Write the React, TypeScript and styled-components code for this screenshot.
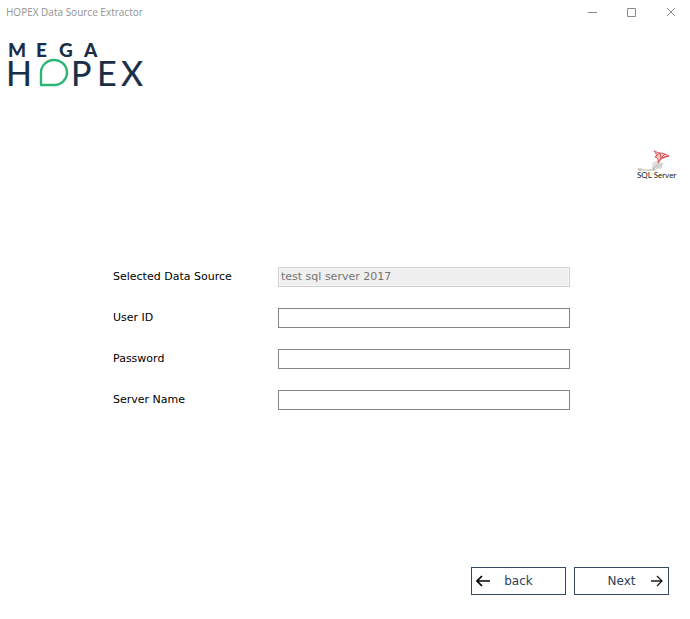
import React from "react";
import styled, { createGlobalStyle } from "styled-components";

const GlobalStyle = createGlobalStyle`
  *, *::before, *::after { box-sizing: border-box; }
  body {
    margin: 0;
    background: #ffffff;
    color: #000000;
    font: 11px/20px "DejaVu Sans", Verdana, sans-serif;
  }
`;

const Window = styled.div`
  display: flex;
  flex-direction: column;
  min-height: 100vh;
  background: #ffffff;
`;

const TitleBar = styled.header`
  display: flex;
  align-items: center;
  justify-content: space-between;
  height: 24px;
  padding-left: 6px;
`;

const Title = styled.h1`
  margin: 0;
  color: #929292;
  font: 400 10px/16px "Open Sans", "Noto Sans", sans-serif;
`;

const WindowControls = styled.div`
  display: flex;
`;

const WindowButton = styled.button`
  display: flex;
  align-items: center;
  justify-content: center;
  width: 39px;
  height: 24px;
  padding: 0;
  border: 0;
  background: transparent;
  color: #8a8a8a;
`;

const Brand = styled.div`
  display: flex;
  padding: 12px 6px 0;
`;

const SourceType = styled.div`
  display: flex;
  justify-content: flex-end;
  padding: 55px 12px 0;
`;

const Form = styled.form`
  display: flex;
  flex: 1;
  flex-direction: column;
`;

const Fields = styled.div`
  display: flex;
  flex-direction: column;
  gap: 21px;
  padding: 87px 120px 40px 113px;
`;

const Field = styled.div`
  display: flex;
  align-items: flex-start;
`;

const Label = styled.label`
  flex: 0 0 165px;
`;

const TextBox = styled.input`
  flex: 1;
  min-width: 0;
  height: 20px;
  padding: 0 2px;
  border: 1px solid #858585;
  border-radius: 0;
  background: #ffffff;
  color: #000000;
  font: inherit;

  &:disabled {
    border-color: #cfcfcf;
    background: #efefef;
    color: #747474;
    box-shadow: inset 0 0 0 1px #f8f8f8;
  }
`;

const Actions = styled.footer`
  display: flex;
  justify-content: flex-end;
  gap: 8px;
  margin-top: auto;
  padding: 0 21px 24px;
`;

const ActionButton = styled.button`
  display: grid;
  grid-template-columns: 14px 1fr 14px;
  align-items: center;
  width: 95px;
  height: 28px;
  padding: 0 4px;
  border: 1px solid #34495f;
  border-radius: 0;
  background: #ffffff;
  color: #2b3f55;
  font: 12px/16px "DejaVu Sans", Verdana, sans-serif;
  text-align: center;
`;

const ActionText = styled.span`
  grid-column: 2;
`;

function HopexLogo() {
  return (
    <svg width="140" height="58" viewBox="6 36 140 58" role="img" aria-label="MEGA HOPEX">
      <g fill="#1a2e47" fontFamily="Lato, sans-serif">
        <text x="8 36 59 84" y="57" fontSize="19" fontWeight="900">MEGA</text>
        <g fontSize="34" stroke="#1a2e47" strokeWidth="0.2">
          <text x="6" y="86">H</text>
          <text x="71 97 121" y="86">PEX</text>
        </g>
      </g>
      <path d="M41 85V73a13 12.5 0 1 1 13 12Z" fill="none" stroke="#2bb673" strokeWidth="2.4" strokeLinejoin="round" />
    </svg>
  );
}

function SqlServerLogo() {
  return (
    <svg width="42" height="31" viewBox="636 149 42 31" role="img" aria-label="Microsoft SQL Server">
      <path d="M652 163c3-2 7-2 11 0l-3 6-5-1-3 2c1-3 1-4 0-7Z" fill="#dedede" />
      <path d="M652 168l7-4M654 169l5-5M656 169l6-5M660 169l3-6" fill="none" stroke="#b9b9b9" strokeWidth="0.7" />
      <path d="M654 151c2 0 3 2 6 2 4 0 7 2 9 3-5 1-8 3-11 6 0-3-1-4-3-5 2-1 2-2-1-6Z" fill="#f6c9c9" />
      <path d="M654 151c3 3 3 5 1 6 3 1 4 3 3 6 2-4 6-6 11-7-3-2-6-3-9-3s-4-2-6-2M655 157l5-4 1 5 4-4M658 162l3-4 8-2" fill="none" stroke="#d9474a" strokeWidth="0.9" />
      <text x="638" y="171" fontSize="4" fill="#777777" fontFamily="Open Sans, sans-serif">Microsoft</text>
      <text x="637" y="178" fontSize="8" fill="#171717" fontFamily="Lato, sans-serif">SQL Server</text>
    </svg>
  );
}

const fields = [
  { id: "source", label: "Selected Data Source", type: "text", value: "test sql server 2017", disabled: true },
  { id: "user", label: "User ID", type: "text", value: "", disabled: false },
  { id: "password", label: "Password", type: "password", value: "", disabled: false },
  { id: "server", label: "Server Name", type: "text", value: "", disabled: false },
];

export default function App() {
  return (
    <Window>
      <GlobalStyle />
      <TitleBar>
        <Title>HOPEX Data Source Extractor</Title>
        <WindowControls>
          <WindowButton type="button" aria-label="Minimize">
            <svg width="10" height="10" viewBox="0 0 10 10"><path d="M0 5.5h9" stroke="currentColor" /></svg>
          </WindowButton>
          <WindowButton type="button" aria-label="Maximize">
            <svg width="10" height="10" viewBox="0 0 10 10"><path d="M.5 1.5h8v8h-8Z" fill="none" stroke="currentColor" /></svg>
          </WindowButton>
          <WindowButton type="button" aria-label="Close">
            <svg width="10" height="10" viewBox="0 0 10 10"><path d="M1 1l8 8M9 1L1 9" stroke="currentColor" /></svg>
          </WindowButton>
        </WindowControls>
      </TitleBar>
      <Brand><HopexLogo /></Brand>
      <SourceType><SqlServerLogo /></SourceType>
      <Form onSubmit={(event) => event.preventDefault()}>
        <Fields>
          {fields.map((field) => (
            <Field key={field.id}>
              <Label htmlFor={field.id}>{field.label}</Label>
              <TextBox id={field.id} type={field.type} defaultValue={field.value} disabled={field.disabled} autoComplete="off" />
            </Field>
          ))}
        </Fields>
        <Actions>
          <ActionButton type="button">
            <svg width="14" height="12" viewBox="0 0 14 12"><path d="M14 6H1M6 1L1 6l5 5" fill="none" stroke="#000000" strokeWidth="1.7" /></svg>
            <ActionText>back</ActionText>
          </ActionButton>
          <ActionButton type="submit">
            <ActionText>Next</ActionText>
            <svg width="14" height="12" viewBox="0 0 14 12"><path d="M1 6h11M7 1l5 5-5 5" fill="none" stroke="#1c1c1c" strokeWidth="1.3" /></svg>
          </ActionButton>
        </Actions>
      </Form>
    </Window>
  );
}
